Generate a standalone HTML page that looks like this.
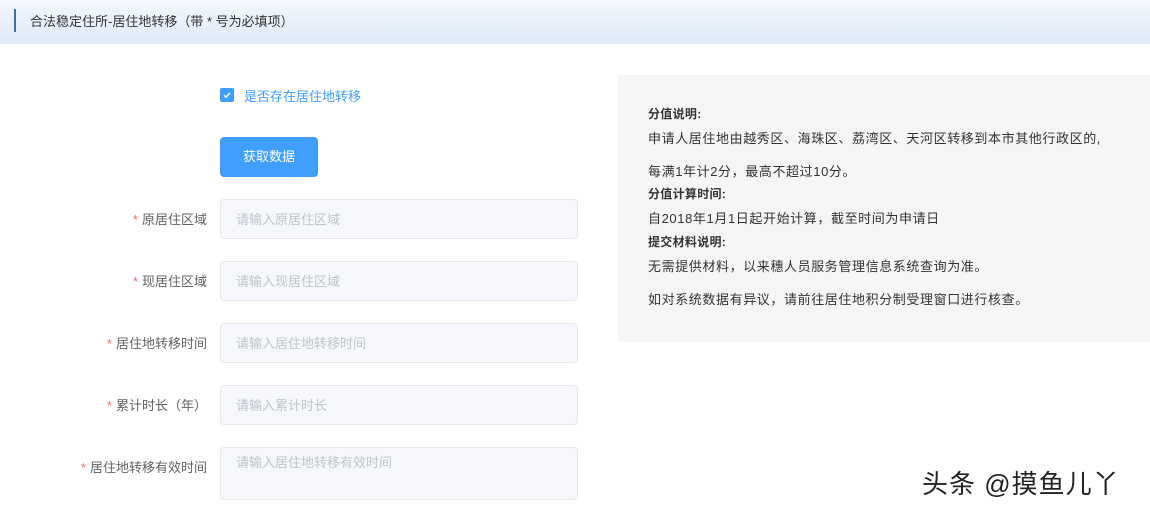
<!DOCTYPE html><html><head><meta charset="utf-8"><style>
*{margin:0;padding:0;box-sizing:border-box}
body{width:1150px;height:514px;background:#fff;font-family:"Liberation Sans","Noto Sans CJK SC",sans-serif;position:relative;overflow:hidden;color:#606266}
.hdr{position:absolute;left:0;top:0;width:1150px;height:44px;background:linear-gradient(#f4f8fd,#dde9f7)}
.hdr i{position:absolute;left:14px;top:9px;width:2px;height:23px;background:#3d6fa8}
.hdr span{position:absolute;left:30px;top:11px;font-size:13px;color:#333}
.a{position:absolute}
.lbl{position:absolute;right:943px;font-size:13px;color:#606266;white-space:nowrap}
.lbl b{color:#f56c6c;font-weight:normal;margin-right:4px}
.in{position:absolute;left:220px;width:358px;height:40px;background:#f5f7fa;border:1px solid #e4e7ed;border-radius:4px;font-size:13px;color:#c0c4cc;padding:0 15px;line-height:40px}
.box{position:absolute;left:618px;top:75px;width:532px;height:267px;background:#f5f5f5;font-size:13px;color:#333;padding-left:30px}
.box p{position:absolute;left:30px;white-space:nowrap;letter-spacing:0.6px}
.box .t{font-weight:bold;font-size:12px;letter-spacing:0.3px}
</style></head><body>
<div class="hdr"><i></i><span>合法稳定住所-居住地转移（带 * 号为必填项）</span></div>
<div class="a" style="left:220px;top:88px;width:14px;height:14px;background:#409eff;border-radius:2px"><svg width="14" height="14"><path d="M4 7.2l2 2 4-4.4" stroke="#fff" stroke-width="1.4" fill="none"/></svg></div>
<div class="a" style="left:244px;top:86px;font-size:13px;color:#409eff">是否存在居住地转移</div>
<div class="a" style="left:220px;top:137px;width:98px;height:40px;background:#409eff;border-radius:4px;color:#fff;font-size:13px;text-align:center;line-height:40px">获取数据</div>
<div class="lbl" style="top:209px"><b>*</b>原居住区域</div><div class="in" style="top:199px">请输入原居住区域</div>
<div class="lbl" style="top:271px"><b>*</b>现居住区域</div><div class="in" style="top:261px">请输入现居住区域</div>
<div class="lbl" style="top:333px"><b>*</b>居住地转移时间</div><div class="in" style="top:323px">请输入居住地转移时间</div>
<div class="lbl" style="top:395px"><b>*</b>累计时长（年）</div><div class="in" style="top:385px">请输入累计时长</div>
<div class="lbl" style="top:457px"><b>*</b>居住地转移有效时间</div><div class="in" style="top:447px;height:53px;line-height:30px">请输入居住地转移有效时间</div>
<div class="box">
<p class="t" style="top:30px">分值说明:</p>
<p style="top:53px">申请人居住地由越秀区、海珠区、荔湾区、天河区转移到本市其他行政区的,</p>
<p style="top:86px">每满1年计2分，最高不超过10分。</p>
<p class="t" style="top:110px">分值计算时间:</p>
<p style="top:133px">自2018年1月1日起开始计算，截至时间为申请日</p>
<p class="t" style="top:158px">提交材料说明:</p>
<p style="top:181px">无需提供材料，以来穗人员服务管理信息系统查询为准。</p>
<p style="top:214px">如对系统数据有异议，请前往居住地积分制受理窗口进行核查。</p>
</div>
<div class="a" style="left:922px;top:464px;font-size:26px;letter-spacing:1px;color:#222;text-shadow:0 0 2px #fff">头条 @摸鱼儿丫</div>
</body></html>
